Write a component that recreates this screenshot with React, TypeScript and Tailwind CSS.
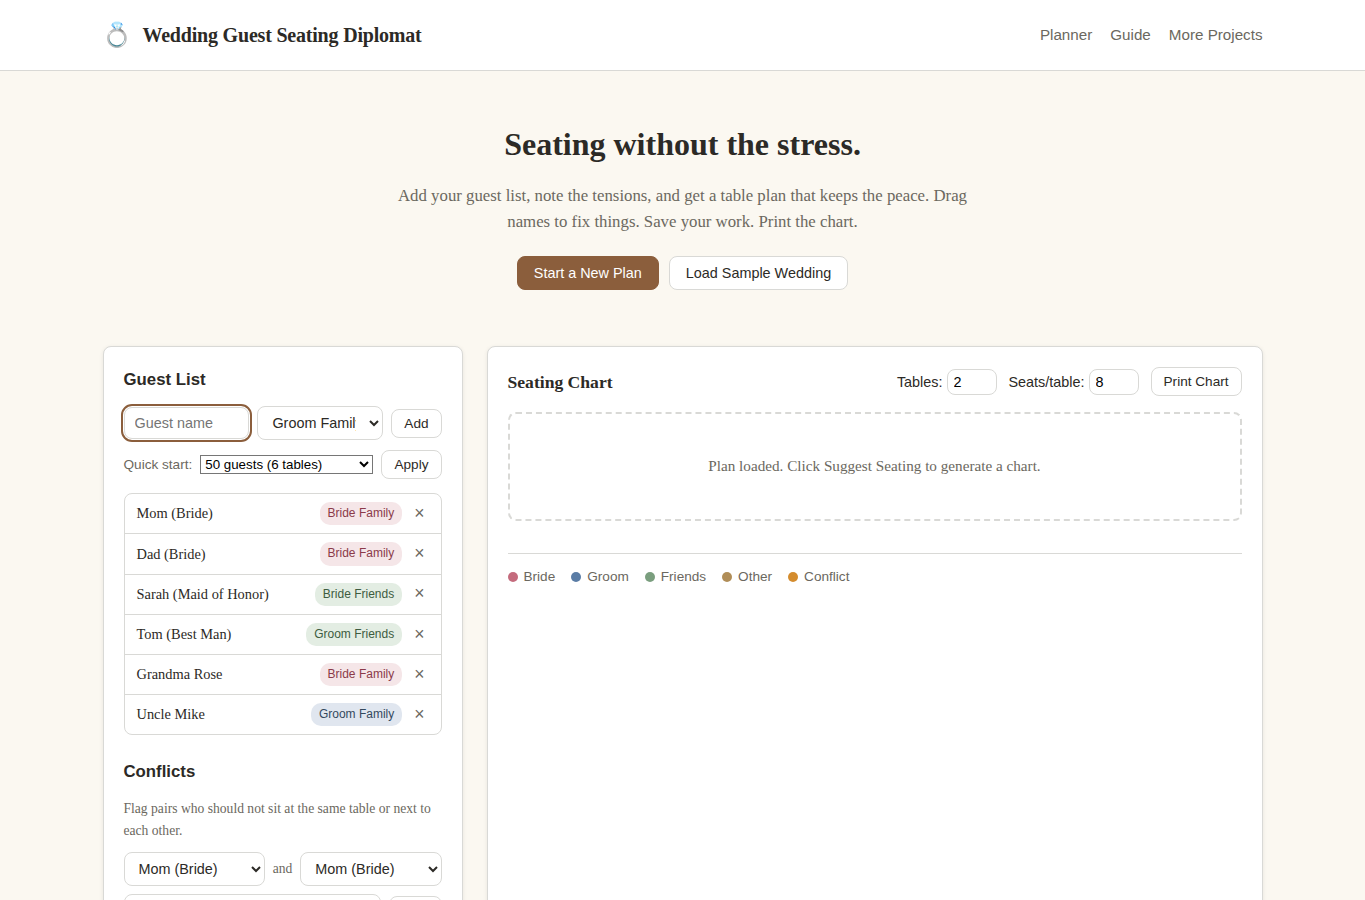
import { useState } from "react";
import clsx from "clsx";

interface Guest {
  id: number;
  name: string;
  group: string;
}

const INITIAL_GUESTS: Guest[] = [
  { id: 1, name: "Mom (Bride)", group: "Bride Family" },
  { id: 2, name: "Dad (Bride)", group: "Bride Family" },
  { id: 3, name: "Sarah (Maid of Honor)", group: "Bride Friends" },
  { id: 4, name: "Tom (Best Man)", group: "Groom Friends" },
  { id: 5, name: "Grandma Rose", group: "Bride Family" },
  { id: 6, name: "Uncle Mike", group: "Groom Family" },
];

const LEGEND = [
  { label: "Bride", dot: "bg-[#c46b7d]" },
  { label: "Groom", dot: "bg-[#5a7ca5]" },
  { label: "Friends", dot: "bg-[#7a9e7e]" },
  { label: "Other", dot: "bg-[#b08d57]" },
  { label: "Conflict", dot: "bg-[#d48c2e]" },
];

const tagClasses: Record<string, string> = {
  "Bride Family": "bg-[#f5e6e8] text-[#8b3a4a]",
  "Bride Friends": "bg-[#e3ede3] text-[#3d5c40]",
  "Groom Friends": "bg-[#e3ede3] text-[#3d5c40]",
  "Groom Family": "bg-[#e0e6ef] text-[#34495e]",
};

const sans = "font-['Liberation_Sans',sans-serif]";
const field = `${sans} rounded-lg border border-[#d9d9d6] bg-white px-2.5 text-[14.4px] leading-normal text-[#2c2a26]`;
const smallButton = `${sans} h-[29px] shrink-0 cursor-pointer rounded-lg border border-[#d9d9d6] bg-white px-3 text-[13.6px] leading-[15px] text-[#2c2a26]`;
const numberField =
  "h-[26px] w-[50px] rounded-lg border border-[#d9d9d6] bg-white px-1.5 text-[14.4px] text-black";

export default function App() {
  const [guests, setGuests] = useState<Guest[]>(INITIAL_GUESTS);
  const [name, setName] = useState("");
  const [group, setGroup] = useState("Groom Family");
  const [tables, setTables] = useState(2);
  const [seats, setSeats] = useState(8);

  const addGuest = () => {
    if (!name.trim()) return;
    setGuests([...guests, { id: Date.now(), name: name.trim(), group }]);
    setName("");
  };

  return (
    <div className="h-screen overflow-hidden bg-[#fbf8f1] font-['Liberation_Serif',serif] leading-[1.6] text-[#2c2a26]">
      <header className="border-b border-[#d9d9d6] bg-white">
        <div className="mx-auto flex h-[70px] max-w-[1200px] items-center justify-between px-5">
          <div className="flex items-center gap-2.5">
            <span className="mr-[0.5px] -ml-[0.5px] text-2xl">💍</span>
            <span className="text-[20px] font-bold tracking-[-0.01em]">
              Wedding Guest Seating Diplomat
            </span>
          </div>
          <nav className={`${sans} flex gap-[18px] text-[15.2px] text-[#6b6860]`}>
            <a href="#planner">Planner</a>
            <a href="#guide">Guide</a>
            <a href="#projects">More Projects</a>
          </nav>
        </div>
      </header>

      <main className="mx-auto max-w-[1200px] px-5">
        {/* Hero */}
        <section className="flex flex-col items-center pt-12 pb-14 text-center">
          <h1 className="text-[32px] leading-[51px] font-bold">
            Seating without the stress.
          </h1>
          <p className="mt-[13px] max-w-[600px] text-[16.8px] leading-[26px] text-[#6b6860]">
            Add your guest list, note the tensions, and get a table plan that
            keeps the peace. Drag names to fix things. Save your work. Print the
            chart.
          </p>
          <div className={`${sans} mt-[21.4px] flex gap-2.5 text-[14.4px] leading-none`}>
            <button className="h-[34px] cursor-pointer rounded-lg border border-[#8b5e3c] bg-[#8b5e3c] px-4 text-white">
              Start a New Plan
            </button>
            <button className="h-[34px] cursor-pointer rounded-lg border border-[#d9d9d6] bg-white px-4">
              Load Sample Wedding
            </button>
          </div>
        </section>

        <div className="grid grid-cols-[360px_1fr] gap-6">
          {/* Guests and conflicts */}
          <aside className="h-[800px] rounded-lg border border-[#d9d9d6] bg-white p-5 shadow-[0_1px_4px_rgba(0,0,0,0.08)]">
            <h2 className={`${sans} mb-3 text-[16.8px] font-bold`}>Guest List</h2>
            <div className="mb-2.5 flex items-center gap-2">
              <input
                value={name}
                onChange={(e) => setName(e.target.value)}
                placeholder="Guest name"
                className={`${field} h-8 w-0 flex-1 outline-2 outline-offset-1 outline-[#8b5e3c] placeholder:text-[#757575]`}
              />
              <select
                value={group}
                onChange={(e) => setGroup(e.target.value)}
                className={`${field} h-[34px] w-0 flex-1`}
              >
                <option>Bride Family</option>
                <option>Groom Family</option>
                <option>Bride Friends</option>
                <option>Groom Friends</option>
              </select>
              <button onClick={addGuest} className={smallButton}>
                Add
              </button>
            </div>

            <div className="mb-3.5 flex items-center gap-2">
              <label className={`${sans} shrink-0 text-[13.6px] leading-none text-[#6b6860]`}>
                Quick start:
              </label>
              <select className={`${sans} h-[19px] w-0 flex-1 border border-[#767676] bg-white text-[13.333px] leading-normal text-black`}>
                <option>50 guests (6 tables)</option>
                <option>100 guests (12 tables)</option>
              </select>
              <button className={smallButton}>Apply</button>
            </div>

            <ul className="rounded-lg border border-[#d9d9d6]">
              {guests.map((guest) => (
                <li
                  key={guest.id}
                  className="flex items-center gap-2 border-b border-[#d9d9d6] px-3 py-2 last:border-b-0"
                >
                  <span className="flex-1 text-[14.4px]">{guest.name}</span>
                  <span
                    className={clsx(
                      sans,
                      "rounded-[10px] px-2 py-0.5 text-[12px] leading-[19.2px]",
                      tagClasses[guest.group]
                    )}
                  >
                    {guest.group}
                  </span>
                  <button
                    onClick={() => setGuests(guests.filter((g) => g.id !== guest.id))}
                    className={`${sans} cursor-pointer px-1 text-[17.6px] leading-[17.6px] text-[#6b6860]`}
                    aria-label="Remove"
                  >
                    ×
                  </button>
                </li>
              ))}
            </ul>

            <h2 className={`${sans} mt-6 mb-3 text-[16.8px] font-bold`}>Conflicts</h2>
            <p className="mb-2.5 text-[13.6px] text-[#6b6860]">
              Flag pairs who should not sit at the same table or next to each other.
            </p>
            <div className="mb-2 flex items-center gap-2">
              <select className={`${field} h-[34px] w-0 flex-1`}>
                {guests.map((g) => (
                  <option key={g.id}>{g.name}</option>
                ))}
              </select>
              <span className="text-[13.6px] text-[#6b6860]">and</span>
              <select className={`${field} h-[34px] w-0 flex-1`}>
                {guests.map((g) => (
                  <option key={g.id}>{g.name}</option>
                ))}
              </select>
            </div>
            <div className="flex items-center gap-2">
              <input className={`${field} h-[34px] w-0 flex-1`} />
              <button className={smallButton}>Flag</button>
            </div>
          </aside>

          {/* Chart */}
          <section className="h-[800px] rounded-lg border border-[#d9d9d6] bg-white p-5 shadow-[0_1px_4px_rgba(0,0,0,0.08)]">
            <div className="mb-4 flex h-[29px] items-center justify-between">
              <h2 className="text-[17.6px] font-bold">Seating Chart</h2>
              <div className={`${sans} flex items-center gap-3 text-[14.4px]`}>
                <label className="flex items-center gap-1">
                  <span className="pt-px">Tables:</span>
                  <input
                    type="number"
                    value={tables}
                    onChange={(e) => setTables(Number(e.target.value))}
                    className={numberField}
                  />
                </label>
                <label className="flex items-center gap-1">
                  <span className="pt-px">Seats/table:</span>
                  <input
                    type="number"
                    value={seats}
                    onChange={(e) => setSeats(Number(e.target.value))}
                    className={numberField}
                  />
                </label>
                <button className={smallButton}>Print Chart</button>
              </div>
            </div>

            <div className="rounded-lg border-2 border-dashed border-[#d9d9d6] p-10 text-center text-[15.2px] text-[#6b6860]">
              Plan loaded. Click Suggest Seating to generate a chart.
            </div>

            <div className={`${sans} mt-8 flex gap-4 border-t border-[#d9d9d6] pt-3 text-[13.6px] text-[#6b6860]`}>
              {LEGEND.map((item) => (
                <span key={item.label} className="flex items-center gap-1.5">
                  <span className={clsx("size-2.5 rounded-full", item.dot)} />
                  {item.label}
                </span>
              ))}
            </div>
          </section>
        </div>
      </main>
    </div>
  );
}
